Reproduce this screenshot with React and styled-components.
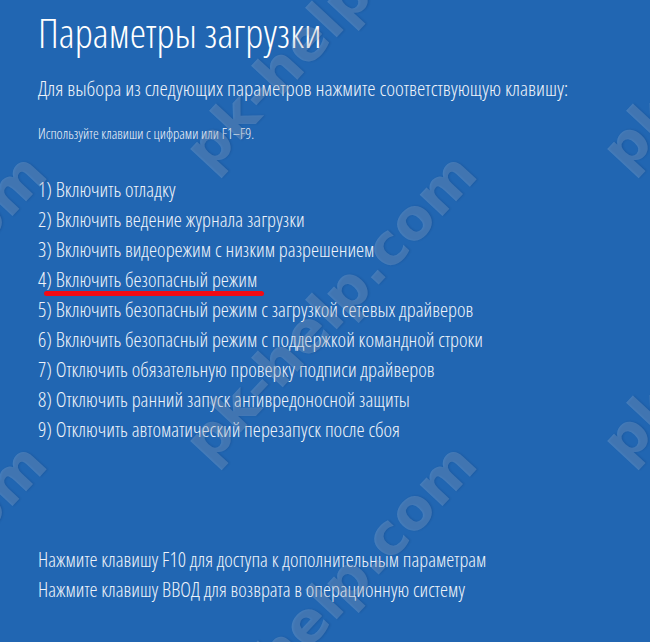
import styled, { createGlobalStyle } from "styled-components";

const GlobalStyle = createGlobalStyle`
  html, body { margin: 0; padding: 0; }
  body { background: #2166b2; }
`;

const options = [
  "Включить отладку",
  "Включить ведение журнала загрузки",
  "Включить видеорежим с низким разрешением",
  "Включить безопасный режим",
  "Включить безопасный режим с загрузкой сетевых драйверов",
  "Включить безопасный режим с поддержкой командной строки",
  "Отключить обязательную проверку подписи драйверов",
  "Отключить ранний запуск антивредоносной защиты",
  "Отключить автоматический перезапуск после сбоя",
];

// watermark grid: columns and rows of the "pk-help.com" stamp
const marks = [];
[-235, 195, 612].forEach((x) => {
  [-130, 160, 452, 742].forEach((y) => marks.push({ x, y }));
});

export default function App() {
  return (
    <Screen>
      <GlobalStyle />
      <Title>Параметры загрузки</Title>
      <Prompt>Для выбора из следующих параметров нажмите соответствующую клавишу:</Prompt>
      <Hint>Используйте клавиши с цифрами или F1–F9.</Hint>
      <OptionList>
        {options.map((text, i) => (
          <Option key={i}>
            <OptionText $marked={i === 3}>
              {i + 1}) {text}
            </OptionText>
          </Option>
        ))}
      </OptionList>
      <Footer>
        <FooterLine>Нажмите клавишу F10 для доступа к дополнительным параметрам</FooterLine>
        <FooterLine>Нажмите клавишу ВВОД для возврата в операционную систему</FooterLine>
      </Footer>
      <WatermarkLayer>
        {marks.map((m, i) => (
          <Watermark key={i} $x={m.x} $y={m.y}>
            pk-help.com
          </Watermark>
        ))}
      </WatermarkLayer>
    </Screen>
  );
}

const Screen = styled.div`
  position: relative;
  overflow: hidden;
  height: 642px;
  box-sizing: border-box;
  padding: 4px 0 0 38px;
  background: #2166b2;
  color: #eef3fa;
  font-family: "Open Sans", "Noto Sans", sans-serif;
  font-weight: 300;
  font-stretch: 75%;
  display: flex;
  flex-direction: column;
`;

const Title = styled.h1`
  margin: 0;
  font-size: 41.3px;
  line-height: 56px;
  font-weight: 300;
  color: #ffffff;
  white-space: nowrap;
`;

const Prompt = styled.div`
  margin-top: 13px;
  font-size: 21px;
  line-height: 30px;
  white-space: nowrap;
`;

const Hint = styled.div`
  margin-top: 21px;
  font-size: 14.5px;
  line-height: 20px;
  white-space: nowrap;
`;

const OptionList = styled.ol`
  list-style: none;
  margin: 30px 0 0;
  padding: 0;
`;

const Option = styled.li`
  font-size: 20.4px;
  line-height: 30px;
  white-space: nowrap;
`;

const OptionText = styled.span`
  position: relative;

  &::after {
    content: "";
    display: ${(p) => (p.$marked ? "block" : "none")};
    position: absolute;
    left: 6px;
    right: -7px;
    top: 26px;
    height: 5px;
    border-radius: 3px;
    background: #f20a14;
  }
`;

const Footer = styled.div`
  margin-top: 100px;
  display: flex;
  flex-direction: column;
`;

const FooterLine = styled.div`
  font-size: 20.3px;
  line-height: 30px;
  white-space: nowrap;
`;

const WatermarkLayer = styled.div`
  position: absolute;
  inset: 0;
  pointer-events: none;
`;

const Watermark = styled.span`
  position: absolute;
  left: ${(p) => p.$x}px;
  top: ${(p) => p.$y - 28}px;
  font-family: "DejaVu Sans", sans-serif;
  font-weight: 700;
  font-stretch: normal;
  font-size: 57px;
  line-height: 56px;
  white-space: nowrap;
  color: rgba(255, 255, 255, 0.17);
  text-shadow: 1px 1px 2px rgba(0, 30, 80, 0.16);
  transform-origin: 0 50%;
  transform: rotate(-47deg);
`;
